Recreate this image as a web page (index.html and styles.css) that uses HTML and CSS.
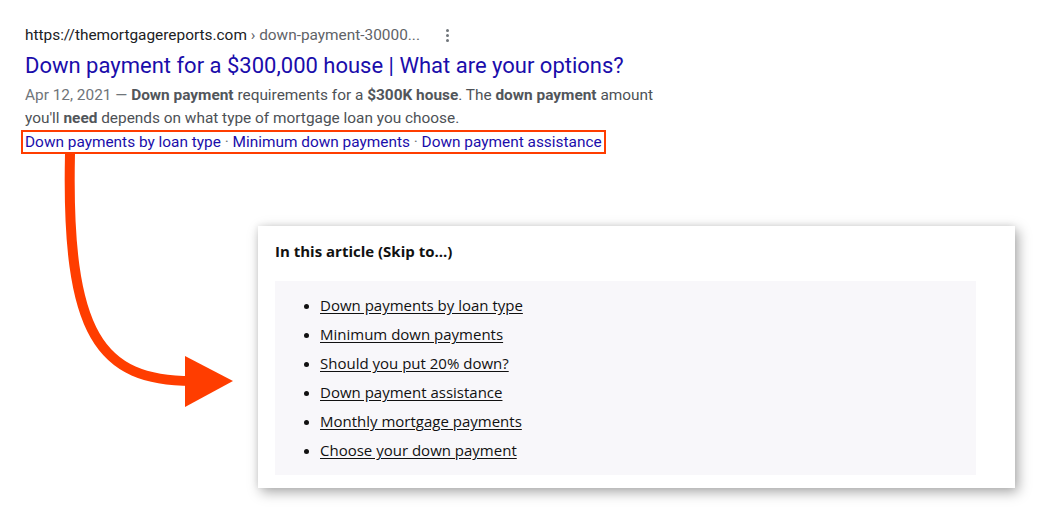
FILE: index.html
```html
<!DOCTYPE html>
<html>
<head>
<meta charset="utf-8">
<link rel="stylesheet" href="styles.css">
</head>
<body>
<div class="page">
  <div class="result">
    <div class="url-row">
      <span class="url">https://themortgagereports.com <span class="crumb">› down-payment-30000...</span></span>
      <span class="more"><i></i><i></i><i></i></span>
    </div>
    <a class="title" href="#">Down payment for a $300,000 house | What are your options?</a>
    <p class="snippet"><span class="date">Apr 12, 2021 — </span><b>Down payment</b> requirements for a <b>$300K house</b>. The <b>down payment</b> amount you'll <b>need</b> depends on what type of mortgage loan you choose.</p>
    <div class="sitelinks">
      <a href="#">Down payments by loan type</a><span class="dot"> · </span><a href="#">Minimum down payments</a><span class="dot"> · </span><a href="#">Down payment assistance</a>
    </div>
  </div>

  <svg class="arrow" width="260" height="420" viewBox="0 0 260 420">
    <path d="M70 154 C 66 335, 100 381, 192 381" fill="none" stroke="#ff3d00" stroke-width="10"/>
    <polygon points="185,356 233,381 185,407" fill="#ff3d00"/>
  </svg>

  <div class="card">
    <div class="card-title">In this article (Skip to...)</div>
    <div class="toc">
      <ul>
        <li><a href="#">Down payments by loan type</a></li>
        <li><a href="#">Minimum down payments</a></li>
        <li><a href="#">Should you put 20% down?</a></li>
        <li><a href="#">Down payment assistance</a></li>
        <li><a href="#">Monthly mortgage payments</a></li>
        <li><a href="#">Choose your down payment</a></li>
      </ul>
    </div>
  </div>
</div>
</body>
</html>
```

FILE: styles.css
```css
* { box-sizing: border-box; }
html, body { margin: 0; padding: 0; background: #fff; }
body { width: 1045px; height: 517px; overflow: hidden; position: relative; }

.page { padding-top: 25px; }

.result {
  margin-left: 25px;
  width: 640px;
  font-family: Roboto, "Liberation Sans", sans-serif;
}

.url-row {
  display: flex;
  align-items: center;
  height: 20px;
  font-size: 15.4px;
  color: #202124;
}
.crumb { color: #5f6368; }
.more {
  display: flex;
  flex-direction: column;
  gap: 2px;
  margin-left: 26px;
}
.more i {
  width: 3px;
  height: 3px;
  background: #70757a;
  border-radius: 50%;
}

.title {
  display: block;
  margin-top: 8px;
  font-size: 22px;
  line-height: 26px;
  color: #1a0dab;
  text-decoration: none;
  white-space: nowrap;
}

.snippet {
  margin: 4.5px 0 0;
  font-size: 15.4px;
  line-height: 23px;
  color: #4d5156;
  width: 650px;
}
.snippet b { color: #52565b; }
.date { color: #70757a; }

.sitelinks {
  width: fit-content;
  margin-left: -4px;
  padding: 0 2px;
  border: 2.5px solid #ff3d00;
  font-size: 15.4px;
  line-height: 20px;
  white-space: nowrap;
}
.sitelinks a { color: #1a0dab; text-decoration: none; }
.dot { color: #70757a; }

.arrow {
  position: absolute;
  left: 0;
  top: 0;
  width: 260px;
  height: 420px;
}

.card {
  margin: 72.5px 0 0 258px;
  width: 757px;
  height: 262px;
  background: #fff;
  box-shadow: 3px 4px 12px rgba(0,0,0,0.35), -1px -1px 6px rgba(0,0,0,0.06);
  padding: 14px 39px 13px 17px;
  font-family: "Open Sans", sans-serif;
  color: #111;
}
.card-title {
  font-weight: 700;
  font-size: 15px;
  line-height: 22px;
}
.toc {
  margin-top: 19px;
  background: #f8f7fa;
  height: 194px;
  padding: 10px 0 0 0;
}
.toc ul {
  margin: 0;
  padding-left: 45px;
  list-style: disc;
}
.toc li {
  font-size: 15px;
  line-height: 29px;
}
.toc li::marker { font-size: 13px; }
.toc a { color: #111; text-decoration: underline; text-underline-offset: 2px; }
```
